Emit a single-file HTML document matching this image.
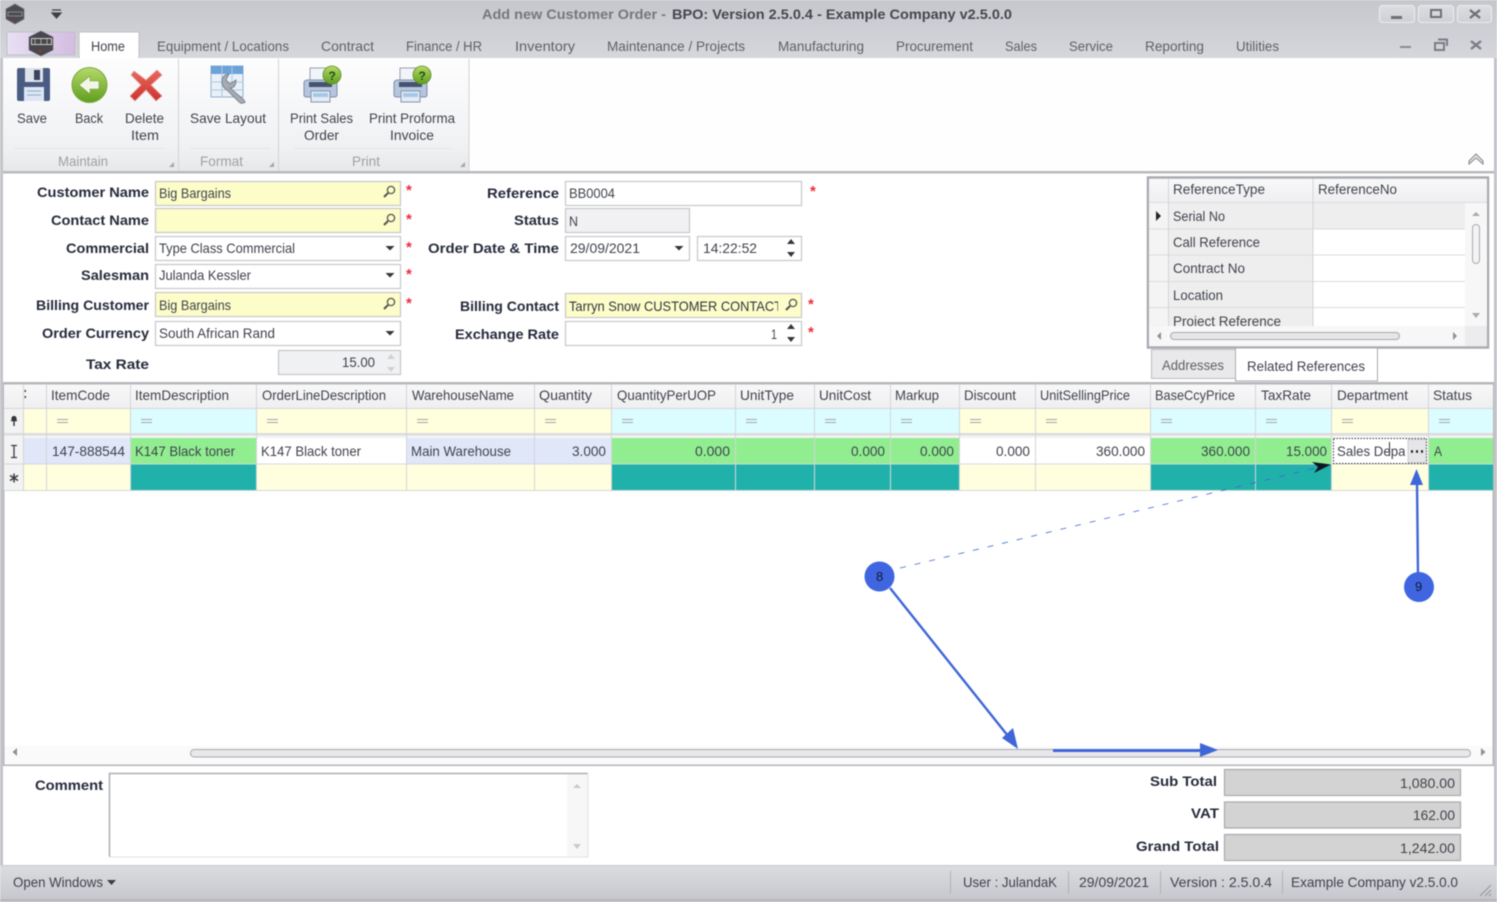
<!DOCTYPE html>
<html><head><meta charset="utf-8"><title>Add new Customer Order</title>
<style>
html,body{margin:0;padding:0;width:1497px;height:902px;overflow:hidden;background:#fff}
svg{display:block;filter:blur(.45px)}
text{font-family:"Liberation Sans",sans-serif;font-size:14px;fill:#3b3f48}
.b{font-weight:bold;fill:#262b3b;font-size:14px}
.t{fill:#5f6166}
.c{fill:#a0a1a5}
.k{fill:#40434c}
.s{fill:#ee2b3c;font-weight:bold;font-size:15px}
</style></head><body>
<svg width="1497" height="902" viewBox="0 0 1497 902" xmlns="http://www.w3.org/2000/svg">
<defs>
<linearGradient id="top" x1="0" y1="0" x2="0" y2="1"><stop offset="0" stop-color="#c6c7cc"/><stop offset="1" stop-color="#d6d7dc"/></linearGradient>
<linearGradient id="rib" x1="0" y1="0" x2="0" y2="1"><stop offset="0" stop-color="#fdfdfe"/><stop offset=".8" stop-color="#f0f1f3"/><stop offset="1" stop-color="#e6e8ea"/></linearGradient>
<linearGradient id="app" x1="0" y1="0" x2="1" y2="0"><stop offset="0" stop-color="#e8e0f4"/><stop offset="1" stop-color="#d4bce0"/></linearGradient>
<linearGradient id="hd" x1="0" y1="0" x2="0" y2="1"><stop offset="0" stop-color="#f8f8f9"/><stop offset="1" stop-color="#efeff1"/></linearGradient>
<linearGradient id="st" x1="0" y1="0" x2="0" y2="1"><stop offset="0" stop-color="#dcdde0"/><stop offset="1" stop-color="#c7c8ce"/></linearGradient>
<linearGradient id="grn" x1="0" y1="0" x2="0" y2="1"><stop offset="0" stop-color="#b5d96a"/><stop offset="1" stop-color="#5f9e1e"/></linearGradient>
<linearGradient id="btn" x1="0" y1="0" x2="0" y2="1"><stop offset="0" stop-color="#dcdde1"/><stop offset="1" stop-color="#cfd0d5"/></linearGradient>
<linearGradient id="red" x1="0" y1="0" x2="0" y2="1"><stop offset="0" stop-color="#e8685c"/><stop offset="1" stop-color="#cc332e"/></linearGradient>
<clipPath id="cCon"><rect x="565" y="293" width="213" height="25"/></clipPath>
<clipPath id="cRef"><rect x="1168" y="304" width="145" height="22"/></clipPath>
<clipPath id="cDep"><rect x="1334" y="440" width="71" height="22"/></clipPath>
<g id="mag"><circle cx="2" cy="-2" r="3.6" fill="none" stroke="#555" stroke-width="1.3"/><path d="M-1 1 L-5 5" stroke="#555" stroke-width="2"/></g>
<path id="dd" d="M-4.500 -2 H4.500 L0 2.500 Z" fill="#33363e"/>
<g id="spin"><path d="M-4 -4 H4 L0 -9 Z" fill="#33363e"/><path d="M-4 4 H4 L0 9 Z" fill="#33363e"/></g>
<g id="printer">
<path d="M7 1 H27 V17 H7Z" fill="#f1f4f8" stroke="#93a0b3"/>
<path d="M1 16 Q1 13 5 13 H30 Q34 13 34 16 V28 Q34 30 31 30 H4 Q1 30 1 28Z" fill="#b4c5dd" stroke="#7f8ea8"/>
<path d="M6 15 H29 V20 H6Z" fill="#45536c"/>
<path d="M8 24 H27 V35 H8Z" fill="#e3ebf4" stroke="#8595ac"/>
<path d="M10 26 H25 V30 H10Z" fill="#a6c8e8"/>
<circle cx="29" cy="8" r="9" fill="url(#grn)" stroke="#5e8c1e" stroke-width=".8"/>
</g>
</defs>

<rect width="1497" height="902" fill="#fff"/>
<rect width="1497" height="58" fill="url(#top)"/>
<rect x="0" y="58" width="3" height="844" fill="#c3c4c9"/>
<rect x="1494" y="58" width="3" height="844" fill="#c3c4c9"/>

<!-- title bar -->
<path d="M15 4 L24 9 V19 L15 24 L6 19 V9Z" fill="#4c4b50" stroke="#77777b" stroke-width=".8"/>
<path d="M8 12 H22 V16 H8Z" fill="none" stroke="#9a9a9e" stroke-width=".8"/>
<circle cx="14" cy="21" r="1.100" fill="#8a3a3a"/>
<path d="M52 10 H61 M52 13 H61 L56.500 18Z" stroke="#3d3f46" fill="#3d3f46" stroke-width="1.200"/>
<text x="482" y="19" textLength="184" lengthAdjust="spacingAndGlyphs" style="font-weight:bold;fill:#76777c">Add new Customer Order -</text>
<text x="672" y="19" textLength="340" lengthAdjust="spacingAndGlyphs" style="font-weight:bold;fill:#45474f">BPO: Version 2.5.0.4 - Example Company v2.5.0.0</text>
<rect x="1379.500" y="5.500" width="35" height="17" rx="3" fill="url(#btn)" stroke="#eceded"/>
<rect x="1418.500" y="5.500" width="35" height="17" rx="3" fill="url(#btn)" stroke="#eceded"/>
<rect x="1457.500" y="5.500" width="34" height="17" rx="3" fill="url(#btn)" stroke="#eceded"/>
<rect x="1391" y="16" width="11" height="3" fill="#6d7078"/>
<rect x="1431" y="10" width="10" height="7" fill="none" stroke="#6d7078" stroke-width="2"/>
<path d="M1470 10 L1480 18 M1480 10 L1470 18" stroke="#6d7078" stroke-width="2.400"/>

<!-- tabs -->
<rect x="7" y="32" width="68" height="23" fill="url(#app)" stroke="#bfc0c8"/>
<path d="M41 31 L53 37 V50 L41 56 L29 50 V37Z" fill="#48474b" stroke="#706f74" stroke-width=".6"/>
<rect x="31.500" y="38.500" width="20" height="6" fill="none" stroke="#c9c9c9" stroke-width="1"/>
<path d="M35 38.500 V44.500 M41 38.500 V44.500 M47 38.500 V44.500" stroke="#c9c9c9" stroke-width=".7"/>
<circle cx="40" cy="51" r="1.400" fill="#92383a"/>
<path d="M79 58 V33 Q79 32 80 32 H138 Q139 32 139 33 V58Z" fill="#fff" stroke="#c0c1c6"/>
<text x="91" y="51" textLength="34" lengthAdjust="spacingAndGlyphs" class="k">Home</text>
<text class="t" x="157" y="51" textLength="132" lengthAdjust="spacingAndGlyphs">Equipment / Locations</text>
<text class="t" x="321" y="51" textLength="53" lengthAdjust="spacingAndGlyphs">Contract</text>
<text class="t" x="406" y="51" textLength="76" lengthAdjust="spacingAndGlyphs">Finance / HR</text>
<text class="t" x="515" y="51" textLength="60" lengthAdjust="spacingAndGlyphs">Inventory</text>
<text class="t" x="607" y="51" textLength="138" lengthAdjust="spacingAndGlyphs">Maintenance / Projects</text>
<text class="t" x="778" y="51" textLength="86" lengthAdjust="spacingAndGlyphs">Manufacturing</text>
<text class="t" x="896" y="51" textLength="77" lengthAdjust="spacingAndGlyphs">Procurement</text>
<text class="t" x="1005" y="51" textLength="32" lengthAdjust="spacingAndGlyphs">Sales</text>
<text class="t" x="1069" y="51" textLength="44" lengthAdjust="spacingAndGlyphs">Service</text>
<text class="t" x="1145" y="51" textLength="59" lengthAdjust="spacingAndGlyphs">Reporting</text>
<text class="t" x="1236" y="51" textLength="43" lengthAdjust="spacingAndGlyphs">Utilities</text>
<rect x="1400" y="46" width="11" height="2" fill="#8a8c93"/>
<path d="M1438 39.500 H1447 V46 M1435 43 H1444 V50 H1435Z" fill="none" stroke="#7b7d85" stroke-width="2"/>
<path d="M1471 41 L1481 49 M1481 41 L1471 49" stroke="#7b7d85" stroke-width="2.400"/>

<!-- ribbon -->
<rect x="3" y="58" width="1491" height="114" fill="#fefefe"/>
<rect x="3" y="59" width="176" height="112" fill="url(#rib)"/>
<rect x="179" y="59" width="100" height="112" fill="url(#rib)"/>
<rect x="279" y="59" width="190" height="112" fill="url(#rib)"/>
<path d="M178.500 59 V171 M278.500 59 V171 M469 59 V171" stroke="#d2d3d6"/>
<path d="M14 148.500 H165 M190 148.500 H270 M294 148.500 H452" stroke="#e3e4e6"/>
<rect x="3" y="171" width="1491" height="2.500" fill="#b9babe"/>
<rect x="80" y="57" width="58" height="2" fill="#fff"/>

<!-- floppy -->
<path d="M17 70 Q17 68 19 68 H48 Q50 68 50 70 V99 Q50 101 48 101 H19 Q17 101 17 99Z" fill="#4b5c82"/>
<rect x="25" y="68" width="18" height="14" fill="#dfe3e9"/><rect x="34" y="70" width="6" height="10" fill="#39455e"/>
<rect x="24" y="87" width="20" height="14" fill="#dde7f3"/>
<path d="M27 91 H41 M27 95 H41" stroke="#8faac8"/>
<!-- back -->
<circle cx="89.500" cy="85" r="17.500" fill="url(#grn)" stroke="#7da63c"/>
<path d="M79 85 L90 76 V81 H99 V89 H90 V94Z" fill="#f2f6ea" stroke="#7aa23a" stroke-width=".6"/>
<!-- delete -->
<path d="M134 71 L146 80 L157 70 L162 75 L151 85 L162 96 L156 101 L146 90 L135 101 L130 96 L141 85 L131 75Z" fill="url(#red)" stroke="#e4a49e" stroke-width=".8"/>
<!-- save layout -->
<rect x="211" y="66" width="32" height="31" fill="#e8f0f9" stroke="#93b0ce"/>
<rect x="211" y="66" width="32" height="8" fill="#6aa2d9"/>
<path d="M222 66 V97 M232 66 V97 M211 82 H243 M211 90 H243" stroke="#b0c9e3"/>
<path d="M222 83 Q221 75 229 74 L226 80 L230 84 L236 80 Q236 88 230 88 L243 99 Q247 103 243 103 Q241 104 239 102 L227 90 Q223 88 222 83Z" fill="#a7abb2" stroke="#74787f" stroke-width=".8"/>
<!-- printers -->
<use href="#printer" x="303" y="67"/>
<use href="#printer" x="393" y="67"/>
<text x="328.500" y="80" style="font-weight:bold;font-size:12px;fill:#1f4d14">?</text>
<text x="418.500" y="80" style="font-weight:bold;font-size:12px;fill:#1f4d14">?</text>

<text x="17" y="123" textLength="30" lengthAdjust="spacingAndGlyphs" class="k">Save</text>
<text x="75" y="123" textLength="28" lengthAdjust="spacingAndGlyphs" class="k">Back</text>
<text x="125" y="123" textLength="39" lengthAdjust="spacingAndGlyphs" class="k">Delete</text>
<text x="131" y="140" textLength="28" lengthAdjust="spacingAndGlyphs" class="k">Item</text>
<text x="190" y="123" textLength="76" lengthAdjust="spacingAndGlyphs" class="k">Save Layout</text>
<text x="290" y="123" textLength="63" lengthAdjust="spacingAndGlyphs" class="k">Print Sales</text>
<text x="304" y="140" textLength="35" lengthAdjust="spacingAndGlyphs" class="k">Order</text>
<text x="369" y="123" textLength="86" lengthAdjust="spacingAndGlyphs" class="k">Print Proforma</text>
<text x="390" y="140" textLength="44" lengthAdjust="spacingAndGlyphs" class="k">Invoice</text>
<text x="58" y="166" textLength="50" lengthAdjust="spacingAndGlyphs" class="c">Maintain</text>
<text x="200" y="166" textLength="43" lengthAdjust="spacingAndGlyphs" class="c">Format</text>
<text x="352" y="166" textLength="28" lengthAdjust="spacingAndGlyphs" class="c">Print</text>
<path d="M174 162 V167 H169Z M274 162 V167 H269Z M465 162 V167 H460Z" fill="#a5a6aa"/>
<path d="M1469 161 L1476 154 L1483 161 V164 L1476 158 L1469 164Z" fill="#e6e7e9" stroke="#85878e"/>

<!-- form labels -->
<text class="b" x="37" y="197" textLength="112" lengthAdjust="spacingAndGlyphs">Customer Name</text>
<text class="b" x="51" y="225" textLength="98" lengthAdjust="spacingAndGlyphs">Contact Name</text>
<text class="b" x="66" y="253" textLength="83" lengthAdjust="spacingAndGlyphs">Commercial</text>
<text class="b" x="81" y="280" textLength="68" lengthAdjust="spacingAndGlyphs">Salesman</text>
<text class="b" x="36" y="310" textLength="113" lengthAdjust="spacingAndGlyphs">Billing Customer</text>
<text class="b" x="42" y="338" textLength="107" lengthAdjust="spacingAndGlyphs">Order Currency</text>
<text class="b" x="86" y="369" textLength="63" lengthAdjust="spacingAndGlyphs">Tax Rate</text>
<text class="b" x="487" y="198" textLength="72" lengthAdjust="spacingAndGlyphs">Reference</text>
<text class="b" x="514" y="225" textLength="45" lengthAdjust="spacingAndGlyphs">Status</text>
<text class="b" x="428" y="253" textLength="131" lengthAdjust="spacingAndGlyphs">Order Date &amp; Time</text>
<text class="b" x="460" y="311" textLength="99" lengthAdjust="spacingAndGlyphs">Billing Contact</text>
<text class="b" x="455" y="339" textLength="104" lengthAdjust="spacingAndGlyphs">Exchange Rate</text>

<!-- inputs -->
<g stroke="#c6c7ca" stroke-width="1.200">
<rect x="155.500" y="181.500" width="245" height="24" fill="#fdfdc9"/>
<rect x="155.500" y="208.500" width="245" height="24" fill="#fdfdc9"/>
<rect x="155.500" y="236.500" width="245" height="24" fill="#fff"/>
<rect x="155.500" y="264.500" width="245" height="24" fill="#fff"/>
<rect x="155.500" y="292.500" width="245" height="24" fill="#fdfdc9"/>
<rect x="155.500" y="321.500" width="245" height="24" fill="#fff"/>
<rect x="278.500" y="350.500" width="122" height="24" fill="#f0f1f3"/>
<rect x="565.500" y="181.500" width="236" height="24" fill="#fff"/>
<rect x="565.500" y="208.500" width="124" height="24" fill="#f1f1f3"/>
<rect x="565.500" y="236.500" width="124" height="24" fill="#fff"/>
<rect x="697.500" y="236.500" width="104" height="24" fill="#fff"/>
<rect x="565.500" y="293.500" width="236" height="24" fill="#fdfdc9"/>
<rect x="565.500" y="321.500" width="236" height="24" fill="#fff"/>
</g>
<text x="159" y="198" textLength="72" lengthAdjust="spacingAndGlyphs" class="k">Big Bargains</text>
<text x="159" y="253" textLength="136" lengthAdjust="spacingAndGlyphs" class="k">Type Class Commercial</text>
<text x="159" y="280" textLength="92" lengthAdjust="spacingAndGlyphs" class="k">Julanda Kessler</text>
<text x="159" y="310" textLength="72" lengthAdjust="spacingAndGlyphs" class="k">Big Bargains</text>
<text x="159" y="338" textLength="116" lengthAdjust="spacingAndGlyphs" class="k">South African Rand</text>
<text x="342" y="367" textLength="33" lengthAdjust="spacingAndGlyphs" class="k">15.00</text>
<text x="569" y="198" textLength="46" lengthAdjust="spacingAndGlyphs" class="k">BB0004</text>
<text x="569" y="226" textLength="9" lengthAdjust="spacingAndGlyphs" class="k">N</text>
<text x="570" y="253" textLength="70" lengthAdjust="spacingAndGlyphs" class="k">29/09/2021</text>
<text x="703" y="253" textLength="54" lengthAdjust="spacingAndGlyphs" class="k">14:22:52</text>
<g clip-path="url(#cCon)"><text x="569" y="311" textLength="213" lengthAdjust="spacingAndGlyphs" style="fill:#33363e">Tarryn Snow CUSTOMER CONTACT</text></g>
<text x="771" y="339" textLength="6" lengthAdjust="spacingAndGlyphs" class="k">1</text>
<use href="#mag" x="389" y="192"/><use href="#mag" x="389" y="220"/><use href="#mag" x="389" y="304"/><use href="#mag" x="791" y="305"/>
<use href="#dd" x="390" y="248"/><use href="#dd" x="390" y="275"/><use href="#dd" x="390" y="333"/><use href="#dd" x="679" y="248"/>
<use href="#spin" x="791" y="248"/><use href="#spin" x="791" y="333"/>
<path d="M387 359 H395 L391 354Z M387 367 H395 L391 372Z" fill="#d0d1d4"/>
<text class="s" x="406" y="195">*</text><text class="s" x="406" y="224">*</text><text class="s" x="406" y="252">*</text><text class="s" x="406" y="279">*</text><text class="s" x="406" y="308">*</text>
<text class="s" x="810" y="196">*</text><text class="s" x="808" y="309">*</text><text class="s" x="808" y="337">*</text>

<!-- reference grid -->
<rect x="1148" y="177.500" width="340" height="170" fill="#fff" stroke="#a9abb0" stroke-width="2.500"/>
<rect x="1149" y="179" width="338" height="23" fill="url(#hd)"/>
<rect x="1149" y="202" width="19" height="124" fill="#f4f4f5"/>
<rect x="1168" y="203" width="145" height="123" fill="#eeeeee"/>
<rect x="1313" y="203" width="152" height="26" fill="#eeeeee"/>
<rect x="1465" y="203" width="22" height="123" fill="#f7f7f8"/>
<rect x="1149" y="326" width="338" height="20" fill="#f7f7f8"/>
<rect x="1465" y="326" width="22" height="20" fill="#ececee"/>
<path d="M1149 202.500 H1487 M1149 229 H1465 M1149 255 H1465 M1149 281.500 H1465 M1149 307.500 H1465" stroke="#dcdcde"/>
<path d="M1168.500 179 V326 M1313 179 V326" stroke="#d4d5d7"/>
<text x="1173" y="194" textLength="92" lengthAdjust="spacingAndGlyphs" class="k">ReferenceType</text>
<text x="1318" y="194" textLength="79" lengthAdjust="spacingAndGlyphs" class="k">ReferenceNo</text>
<text x="1173" y="221" textLength="52" lengthAdjust="spacingAndGlyphs" class="k">Serial No</text>
<text x="1173" y="247" textLength="87" lengthAdjust="spacingAndGlyphs" class="k">Call Reference</text>
<text x="1173" y="273" textLength="72" lengthAdjust="spacingAndGlyphs" class="k">Contract No</text>
<text x="1173" y="300" textLength="50" lengthAdjust="spacingAndGlyphs" class="k">Location</text>
<g clip-path="url(#cRef)"><text x="1173" y="326" textLength="108" lengthAdjust="spacingAndGlyphs" class="k">Project Reference</text></g>
<path d="M1156 211 L1161 216 L1156 221Z" fill="#22242a"/>
<path d="M1472 216 H1480 L1476 212Z" fill="#a9aaad"/><path d="M1472 313 H1480 L1476 318Z" fill="#a9aaad"/>
<rect x="1472.500" y="224.500" width="7" height="39" rx="3.500" fill="#f3f3f4" stroke="#a9aaae"/>
<rect x="1170.500" y="332.500" width="229" height="7" rx="3.500" fill="#e6e6e8" stroke="#a9aaae"/>
<path d="M1161 332 V340 L1157 336Z M1453 332 V340 L1457 336Z" fill="#8f9095"/>
<rect x="1151.500" y="349.500" width="84" height="29" fill="#e9e9eb" stroke="#bcbdc1"/>
<rect x="1235.500" y="348" width="142" height="33" fill="#fff" stroke="#a9abb0"/>
<text x="1162" y="370" textLength="62" lengthAdjust="spacingAndGlyphs" class="t">Addresses</text>
<text x="1247" y="371" textLength="118" lengthAdjust="spacingAndGlyphs" class="k">Related References</text>

<!-- main grid -->
<rect x="3" y="382" width="1491" height="2.500" fill="#b7b8bc"/>
<rect x="3" y="384" width="1.500" height="382" fill="#b7b8bc"/>
<rect x="1492.500" y="384" width="1.500" height="382" fill="#b7b8bc"/>
<rect x="4" y="384.500" width="1489" height="24" fill="url(#hd)"/>
<rect x="4" y="408" width="19" height="25" fill="#f3f3f4"/>
<rect x="4" y="438" width="19" height="52" fill="#f3f3f4"/>
<g fill="#ffffde">
<rect x="23" y="408" width="107" height="25"/><rect x="256" y="408" width="355" height="25"/><rect x="959" y="408" width="191" height="25"/><rect x="1331" y="408" width="97" height="25"/>
</g>
<g fill="#dcfdff">
<rect x="130" y="408" width="126" height="25"/><rect x="611" y="408" width="348" height="25"/><rect x="1150" y="408" width="181" height="25"/><rect x="1428" y="408" width="65" height="25"/>
</g>
<rect x="4" y="433" width="1489" height="2.500" fill="#dcdcde"/>
<rect x="4" y="435.500" width="1489" height="2.500" fill="#f4f4f5"/>
<!-- row 1 -->
<g fill="#dfe7f9"><rect x="23" y="438" width="107" height="26"/><rect x="406" y="438" width="205" height="26"/></g>
<g fill="#90ee90"><rect x="130" y="438" width="126" height="26"/><rect x="611" y="438" width="348" height="26"/><rect x="1150" y="438" width="181" height="26"/><rect x="1428" y="438" width="65" height="26"/></g>
<rect x="256" y="438" width="150" height="26" fill="#fff"/><rect x="959" y="438" width="191" height="26" fill="#fff"/>
<!-- row 2 -->
<g fill="#ffffe0"><rect x="23" y="464" width="107" height="26"/><rect x="256" y="464" width="355" height="26"/><rect x="959" y="464" width="191" height="26"/><rect x="1331" y="464" width="97" height="26"/></g>
<g fill="#20b2aa"><rect x="130" y="464" width="126" height="26"/><rect x="611" y="464" width="348" height="26"/><rect x="1150" y="464" width="181" height="26"/><rect x="1428" y="464" width="65" height="26"/></g>
<path d="M4 408.500 H1493 M4 464 H1493 M4 490.500 H1493" stroke="#d6d7d9"/>
<path d="M23.500 384 V490 M46.500 384 V490 M130.500 384 V490 M256.500 384 V490 M406.500 384 V490 M534.500 384 V490 M611.500 384 V490 M735.500 384 V490 M814.500 384 V490 M890.500 384 V490 M959.500 384 V490 M1035.500 384 V490 M1150.500 384 V490 M1255.500 384 V490 M1331.500 384 V490 M1428.500 384 V490" stroke="#d4d5d7"/>
<!-- headers -->
<text x="51" y="400" textLength="59" lengthAdjust="spacingAndGlyphs" class="k">ItemCode</text>
<text x="135" y="400" textLength="94" lengthAdjust="spacingAndGlyphs" class="k">ItemDescription</text>
<text x="262" y="400" textLength="124" lengthAdjust="spacingAndGlyphs" class="k">OrderLineDescription</text>
<text x="412" y="400" textLength="102" lengthAdjust="spacingAndGlyphs" class="k">WarehouseName</text>
<text x="539" y="400" textLength="53" lengthAdjust="spacingAndGlyphs" class="k">Quantity</text>
<text x="617" y="400" textLength="99" lengthAdjust="spacingAndGlyphs" class="k">QuantityPerUOP</text>
<text x="740" y="400" textLength="54" lengthAdjust="spacingAndGlyphs" class="k">UnitType</text>
<text x="819" y="400" textLength="52" lengthAdjust="spacingAndGlyphs" class="k">UnitCost</text>
<text x="895" y="400" textLength="44" lengthAdjust="spacingAndGlyphs" class="k">Markup</text>
<text x="964" y="400" textLength="52" lengthAdjust="spacingAndGlyphs" class="k">Discount</text>
<text x="1040" y="400" textLength="90" lengthAdjust="spacingAndGlyphs" class="k">UnitSellingPrice</text>
<text x="1155" y="400" textLength="80" lengthAdjust="spacingAndGlyphs" class="k">BaseCcyPrice</text>
<text x="1261" y="400" textLength="50" lengthAdjust="spacingAndGlyphs" class="k">TaxRate</text>
<text x="1337" y="400" textLength="71" lengthAdjust="spacingAndGlyphs" class="k">Department</text>
<text x="1433" y="400" textLength="39" lengthAdjust="spacingAndGlyphs" class="k">Status</text>
<rect x="24.500" y="390" width="1.500" height="2" fill="#444"/><rect x="24.500" y="396" width="1.500" height="2" fill="#444"/>
<!-- filter equals -->
<path d="M57 419.500 H68 M57 422.500 H68 M141 419.500 H152 M141 422.500 H152 M267 419.500 H278 M267 422.500 H278 M417 419.500 H428 M417 422.500 H428 M545 419.500 H556 M545 422.500 H556 M622 419.500 H633 M622 422.500 H633 M746 419.500 H757 M746 422.500 H757 M825 419.500 H836 M825 422.500 H836 M901 419.500 H912 M901 422.500 H912 M970 419.500 H981 M970 422.500 H981 M1046 419.500 H1057 M1046 422.500 H1057 M1161 419.500 H1172 M1161 422.500 H1172 M1266 419.500 H1277 M1266 422.500 H1277 M1342 419.500 H1353 M1342 422.500 H1353 M1439 419.500 H1450 M1439 422.500 H1450" stroke="#a4a5a8"/>
<!-- row text -->
<text x="52" y="456" textLength="73" lengthAdjust="spacingAndGlyphs" class="k">147-888544</text>
<text x="135" y="456" textLength="100" lengthAdjust="spacingAndGlyphs" class="k">K147 Black toner</text>
<text x="261" y="456" textLength="100" lengthAdjust="spacingAndGlyphs" class="k">K147 Black toner</text>
<text x="411" y="456" textLength="100" lengthAdjust="spacingAndGlyphs" class="k">Main Warehouse</text>
<text x="572" y="456" textLength="34" lengthAdjust="spacingAndGlyphs" class="k">3.000</text>
<text x="695" y="456" textLength="35" lengthAdjust="spacingAndGlyphs" class="k">0.000</text>
<text x="851" y="456" textLength="34" lengthAdjust="spacingAndGlyphs" class="k">0.000</text>
<text x="920" y="456" textLength="34" lengthAdjust="spacingAndGlyphs" class="k">0.000</text>
<text x="996" y="456" textLength="34" lengthAdjust="spacingAndGlyphs" class="k">0.000</text>
<text x="1096" y="456" textLength="49" lengthAdjust="spacingAndGlyphs" class="k">360.000</text>
<text x="1201" y="456" textLength="49" lengthAdjust="spacingAndGlyphs" class="k">360.000</text>
<text x="1286" y="456" textLength="41" lengthAdjust="spacingAndGlyphs" class="k">15.000</text>
<text x="1434" y="456" textLength="8" lengthAdjust="spacingAndGlyphs" class="k">A</text>
<!-- edit cell -->
<rect x="1333.500" y="438.500" width="93" height="25" fill="#fff" stroke="#333" stroke-dasharray="1.500 1.500"/>
<g clip-path="url(#cDep)"><text x="1337" y="456" textLength="106" lengthAdjust="spacingAndGlyphs" class="k">Sales Department</text></g>
<rect x="1389" y="442" width="1" height="14" fill="#333"/>
<rect x="1408" y="439.500" width="18" height="23" fill="#e6e6e8" stroke="#b5b6ba" stroke-width=".6"/>
<path d="M1411 451.500 H1413 M1416 451.500 H1418 M1421 451.500 H1423" stroke="#1b1c20" stroke-width="2.400"/>
<!-- indicators -->
<path d="M11 445.500 H17 M14 445.500 V457.500 M11 457.500 H17" stroke="#3b3d44" stroke-width="1.300" fill="none"/>
<path d="M14 473.500 V482.500 M10 475.500 L18 480.500 M18 475.500 L10 480.500" stroke="#3b3d44" stroke-width="1.500"/>
<circle cx="14" cy="418.500" r="2.600" fill="#33353c"/><path d="M11 420.500 H17 M14 420 V426" stroke="#33353c" stroke-width="1.400"/>

<!-- grid scrollbar -->
<rect x="4.500" y="746" width="1488" height="19" fill="#fafafb"/>
<rect x="190.500" y="749.500" width="1280" height="7.500" rx="3.700" fill="#e8e8ea" stroke="#a9aaae"/>
<path d="M17 748 V756 L12.500 752Z M1481 748 V756 L1485.500 752Z" fill="#8f9095"/>
<rect x="3" y="764.500" width="1491" height="1.500" fill="#b4b5b9"/>

<!-- comment and totals -->
<text class="b" x="35" y="790" textLength="68" lengthAdjust="spacingAndGlyphs">Comment</text>
<rect x="109" y="773" width="479" height="84" fill="#fff"/>
<rect x="567" y="774" width="21" height="83" fill="#f7f7f8"/>
<path d="M109.500 857 V773.500 H588" fill="none" stroke="#aeafb3" stroke-width="1.500"/>
<path d="M109 857 H588 V773" fill="none" stroke="#e2e2e4"/>
<path d="M573 788 H581 L577 784Z M573 844 H581 L577 849Z" fill="#c9cacc"/>
<text class="b" x="1150" y="786" textLength="67" lengthAdjust="spacingAndGlyphs">Sub Total</text>
<text class="b" x="1191" y="818" textLength="28" lengthAdjust="spacingAndGlyphs">VAT</text>
<text class="b" x="1136" y="851" textLength="83" lengthAdjust="spacingAndGlyphs">Grand Total</text>
<g fill="#d3d3d3" stroke="#a8a9ab" stroke-width="1.200">
<rect x="1224.500" y="769.500" width="236" height="26"/>
<rect x="1224.500" y="802" width="236" height="26"/>
<rect x="1224.500" y="834.500" width="236" height="26"/>
</g>
<text x="1400" y="788" textLength="55" lengthAdjust="spacingAndGlyphs" class="k">1,080.00</text>
<text x="1413" y="820" textLength="42" lengthAdjust="spacingAndGlyphs" class="k">162.00</text>
<text x="1400" y="853" textLength="55" lengthAdjust="spacingAndGlyphs" class="k">1,242.00</text>

<!-- status bar -->
<rect x="0" y="865" width="1497" height="34" fill="url(#st)"/>
<rect x="0" y="865" width="1497" height="1" fill="#c9cace"/>
<rect x="0" y="899" width="1497" height="3" fill="#b8b9be"/>
<text x="13" y="887" textLength="90" lengthAdjust="spacingAndGlyphs" class="k">Open Windows</text>
<path d="M107 880 H116 L111.500 885Z" fill="#3b3d44"/>
<path d="M950.500 871 V894 M1068.500 871 V894 M1160.500 871 V894 M1282.500 871 V894" stroke="#b1b2b7"/>
<text x="963" y="887" textLength="94" lengthAdjust="spacingAndGlyphs" class="k">User : JulandaK</text>
<text x="1079" y="887" textLength="70" lengthAdjust="spacingAndGlyphs" class="k">29/09/2021</text>
<text x="1170" y="887" textLength="102" lengthAdjust="spacingAndGlyphs" class="k">Version : 2.5.0.4</text>
<text x="1291" y="887" textLength="167" lengthAdjust="spacingAndGlyphs" class="k">Example Company v2.5.0.0</text>
<path d="M1480 896 L1491 885 M1485 896 L1491 890 M1489 896 L1491 894" stroke="#9a9ba0" stroke-width="1.200"/>

<!-- annotations -->
<path d="M900 568 L1320 467" stroke="#3f66d8" stroke-width=".8" stroke-dasharray="6 9" fill="none"/>
<path d="M1331 464.500 L1312 462 L1318 467 L1314 473Z" fill="#101522"/>
<path d="M890 588 L1012 741" stroke="#3f66d8" stroke-width="2.400"/>
<path d="M1018 749 L1002 738 L1013 728Z" fill="#3f66d8"/>
<path d="M1053 750.500 H1205" stroke="#3f66d8" stroke-width="3"/>
<path d="M1218 750 L1200 743 V757Z" fill="#3f66d8"/>
<path d="M1418 575 L1417 482" stroke="#3f66d8" stroke-width="2.400"/>
<path d="M1416.500 469 L1410 485 H1423Z" fill="#3f66d8"/>
<circle cx="879.500" cy="576.500" r="15" fill="#3f66e0"/>
<circle cx="1419" cy="587" r="15" fill="#3f66e0"/>
<text x="876" y="581" style="font-size:13px;fill:#101a33">8</text>
<text x="1415" y="591" style="font-size:13px;fill:#101a33">9</text>
</svg>
</body></html>
